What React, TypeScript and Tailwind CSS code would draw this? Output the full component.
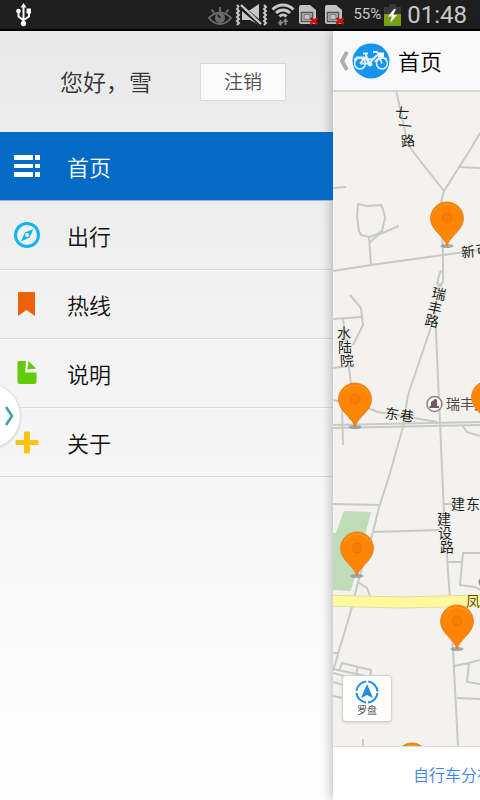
import type { ReactNode } from "react";

function UsbIcon() {
  return (
    <svg width="18" height="24" viewBox="0 0 18 24" fill="none" stroke="#fff" strokeWidth="2">
      <path d="M8.500 3v17M3.500 9v4.500l4.500 3.500M14 9v4.500l-4.500 3" />
      <path d="M8.500 0l3 4.500h-6z" fill="#fff" stroke="none" />
      <circle cx="3.500" cy="8" r="2.300" fill="#fff" stroke="none" />
      <path d="M11.500 5.500h4.500v5h-4.500z" fill="#fff" stroke="none" />
      <circle cx="8.500" cy="20.500" r="2.700" fill="#fff" stroke="none" />
    </svg>
  );
}

function EyeIcon() {
  return (
    <svg width="24" height="22" viewBox="0 0 24 22" fill="none" stroke="#6a6a6a">
      <path d="M1 14c6-7 16-7 22 0-6 8-16 8-22 0z" strokeWidth="2" />
      <circle cx="12" cy="14" r="5" fill="#6a6a6a" stroke="none" />
      <path d="M12.500 14l-2.500-3" stroke="#1e1e1e" strokeWidth="1.600" />
      <path d="M12 8V3M6 9L3.500 5.500M18 9l2.500-3.500" strokeWidth="2" />
    </svg>
  );
}

function VibrateIcon() {
  return (
    <svg width="33" height="22" viewBox="0 0 33 22" fill="none" stroke="#c8c8c8">
      <path d="M2 1l2 2-2 2 2 2-2 2 2 2-2 2 2 2-2 2 2 2-2 2M29 1l2 2-2 2 2 2-2 2 2 2-2 2 2 2-2 2 2 2-2 2" strokeWidth="2" />
      <path d="M7 6h8l9-6v21l-9-5H7z" fill="#c8c8c8" stroke="none" />
      <path d="M5 2l22 19" stroke="#1e1e1e" strokeWidth="5" />
      <path d="M6 1l20 19" strokeWidth="2.400" />
    </svg>
  );
}

function WifiIcon() {
  return (
    <svg width="24" height="23" viewBox="0 0 24 23" fill="none" stroke="#c8c8c8" strokeWidth="3">
      <path d="M1.500 6.500c6-6 15-6 21 0M5 10c4-4 10-4 14 0M8.500 13.500c2-2 5-2 7 0" />
      <path d="M9.500 17v4M14.500 22v-4" stroke="#858585" strokeWidth="2" />
      <path d="M6.500 19h6l-3 4zM11.500 19h6l-3-4z" fill="#858585" stroke="none" />
    </svg>
  );
}

function SimIcon() {
  return (
    <svg width="22" height="20" viewBox="0 0 22 20" fill="none">
      <path d="M1 2q0-2 2-2h9l6 5v12q0 2-2 2H3q-2 0-2-2z" fill="#c2c2c2" />
      <rect x="3.500" y="7.500" width="11" height="9" stroke="#555" strokeWidth="1.500" />
      <rect x="6" y="9.500" width="6" height="5" stroke="#777" />
      <path d="M12.500 13l7 6M19.500 13l-7 6" stroke="#d00d0d" strokeWidth="2.400" />
    </svg>
  );
}

function BatteryIcon() {
  return (
    <svg width="17" height="22" viewBox="0 0 17 22">
      <path d="M5 0h7v3h5v19H0V3h5z" fill="#383838" />
      <path d="M0 10h17v12H0z" fill="#77a315" />
      <path d="M10 5L4 12.500h4l-2 6.500L13 11H9l3-6z" fill="#fff" />
    </svg>
  );
}

const menu: { label: string; active?: boolean; icon: ReactNode }[] = [
  {
    label: "首页",
    active: true,
    icon: <path d="M1 3h19v5H1zM22 3h5v5h-5zM1 12h19v4H1zM22 12h5v4h-5zM1 20h19v5H1zM22 20h5v5h-5z" fill="#fff" />,
  },
  {
    label: "出行",
    icon: (
      <g>
        <circle cx="14" cy="14" r="11.500" fill="none" stroke="#0cb6f5" strokeWidth="3" />
        <path d="M20.500 8l-4 8.500L8 20.500l4-9z" fill="#0cb6f5" />
        <circle cx="14" cy="14" r="2" fill="#efefef" />
      </g>
    ),
  },
  { label: "热线", icon: <path d="M5 3q0-1 1-1h15q1 0 1 1v23l-8.500-6L5 26z" fill="#ee6203" /> },
  {
    label: "说明",
    icon: (
      <g fill="#63ca08">
        <path d="M6 2h7l-1 11.500h11.500V23q0 2-2 2h-15q-2 0-2-2V4q0-2 1.500-2z" />
        <path d="M15.500 2l7.500 7.500-8.500 1z" />
      </g>
    ),
  },
  { label: "关于", icon: <path d="M11.500 4h5v8.500H25v4h-8.500V25h-5v-8.500H3v-4h8.500z" fill="#ffc411" stroke="#ffc411" strokeLinejoin="round" /> },
];

function Pin({ x, y }: { x: number; y: number }) {
  return (
    <g transform={`translate(${x} ${y})`}>
      <ellipse cx="0" cy="0" rx="6.500" ry="2" fill="#8a8a88" opacity="0.700" />
      <path d="M0 0C-2-9-16.500-16-16.500-27.500a16.500 16.500 0 0 1 33 0C16.500-16 2-9 0 0z" fill="#ff8604" stroke="#e5780f" strokeWidth="0.800" />
      <path d="M-13-34a15 15 0 0 1 26 0" fill="none" stroke="#ff9a30" />
      <circle cx="0" cy="-28" r="5" fill="#f67d05" stroke="#e87406" strokeWidth="0.800" />
    </g>
  );
}

const roads = [
  "M396 90L408 145L418 158L444 191",
  "M480 133L470 150L444 191L441 203L443 255V282L436 290",
  "M458 167L480 168",
  "M333 188L346 187",
  "M333 271L371 265L443 255L480 250",
  "M358 204L367 206L381 205L383 209L385 218L382 231L375 235L369 237L361 235L359 231L357 216Z",
  "M399 226L380 234L373 239L370 243M369 237L371 265",
  "M350 295L361 308L363 325L353 345",
  "M333 319L362 317M343 318L344 327L351 384",
  "M333 368L348 366M333 400L341 402M342 406L343 445",
  "M443 271L440 272L437 284L442 286",
  "M440 285L431 327L408 395L403 427L388 480L379 507L373 532L358 582L352 607L333 671",
  "M435 310L440 423L443 490L444 513L450 600L453 650L458 746",
  "M368 408L378 412L403 416L437 422",
  "M333 425L480 422M333 428L480 425",
  "M462 425L467 432L480 436",
  "M333 504L379 505M373 532L440 530M443 504H453",
  "M448 562H461M480 553L463 553L460 585L475 587L480 590",
  "M358 582L367 588L370 596M333 653H338",
  "M339 671L342 663L371 670L370 677L333 669M358 666L356 675M333 673L344 676",
  "M333 682L343 685M333 696L343 698M363 739V746",
  "M454 666L469 663L480 660M469 663L467 682L480 684M457 698L480 699",
];

/* [character, x, baseline y, rotation] */
const labels: [string, number, number, number][] = [
  ["七", 395, 118, 10],
  ["一", 398, 131, 6],
  ["路", 401, 146, -6],
  ["瑞", 432, 299, 12],
  ["丰", 428, 313, 12],
  ["路", 425, 326, 12],
  ["水", 337, 338, 0],
  ["陆", 338, 352, 0],
  ["院", 340, 366, -4],
  ["东", 385, 419, 8],
  ["巷", 400, 421, 8],
  ["新", 461, 257, -6],
  ["可", 476, 255, -6],
  ["建", 451, 509, 0],
  ["东", 466, 509, 0],
  ["建", 437, 524, 0],
  ["设", 438, 538, 0],
  ["路", 440, 552, 0],
];

function MapCanvas() {
  return (
    <svg className="block h-full w-full font-normal" role="img" aria-label="地图">
      <g transform="translate(-333 -92)">
        <path d="M345 511L371 512L351 591L333 590V533H336L343 513Z" fill="#bfdcb9" />
        <g fill="none" stroke="#c9c9c9" strokeWidth="2" strokeLinejoin="round">
          {roads.map((d) => (
            <path key={d} d={d} />
          ))}
        </g>
        <path d="M320 595L402 597L480 595L900 590V600L480 606L402 608L320 606Z" fill="#fffa9f" stroke="#e3dc9c" />
        <g fontSize="14" fill="#1c1c1c" stroke="#f3f2ee" strokeWidth="1" style={{ paintOrder: "stroke" }}>
          {labels.map(([ch, x, y, r], i) => (
            <text key={i} x={x} y={y} transform={`rotate(${r} ${x + 7} ${y - 5})`}>
              {ch}
            </text>
          ))}
          <text x="466" y="606" fill="#6b4310" stroke="#fffa9f">凤</text>
          <text x="446" y="409" fill="#554647">瑞丰大</text>
        </g>
        <circle cx="434.500" cy="404" r="7.500" fill="#fff" stroke="#8e8080" strokeWidth="1.500" />
        <path d="M429.500 408v-2h1.500v-4l3-2 1-1.500 2 1.500v6h2v2z" fill="#705d5e" />
        <circle cx="484" cy="582" r="5" fill="#e02020" stroke="#999" />
        <Pin x={447} y={246} />
        <Pin x={355} y={427} />
        <Pin x={488} y={425} />
        <Pin x={357} y={576} />
        <Pin x={457} y={649} />
        <Pin x={412} y={787} />
      </g>
    </svg>
  );
}

function BikeLogo() {
  return (
    <svg width="38" height="36" viewBox="0 0 38 36" fill="none" stroke="#e4f3ff">
      <ellipse cx="19" cy="18" rx="18.500" ry="17.500" fill="#1595f0" stroke="none" />
      <circle cx="8" cy="20.500" r="5.500" strokeWidth="1.500" />
      <circle cx="30" cy="20.500" r="5.500" strokeWidth="1.500" />
      <path d="M2 17q6-4 11 1l-1-4H4z" fill="#e4f3ff" fillOpacity="0.600" strokeWidth="1" />
      <path d="M8 20.500h9l8-8M8 20.500l5-6 4.500 6-4-9.500M15 15c3 3 7 1 10-3M30 20.500L25 9h-4M11 10.500h5" strokeWidth="1.800" />
      <path d="M23 19q4-7 12-3" strokeWidth="1.600" />
      <circle cx="18" cy="21" r="2" fill="#e4f3ff" />
      <path d="M26 9.500h6v4.500h-5z" fill="#fff" stroke="none" />
    </svg>
  );
}

export default function App() {
  return (
    <div className="flex h-screen flex-col overflow-hidden bg-white font-['Noto_Sans_CJK_SC',sans-serif] font-[350]">
      <header className="flex h-[31px] shrink-0 items-center border-b-2 border-black bg-[#1e1e1e] pr-[13px] pl-[15px] font-[Roboto,sans-serif] font-normal text-[#c8c8c8]">
        <UsbIcon />
        <div className="ml-auto flex items-center gap-[3px]">
          <EyeIcon />
          <VibrateIcon />
          <WifiIcon />
          <div className="flex gap-1">
            <SimIcon />
            <SimIcon />
          </div>
          <span className="pl-1 text-[15px]">55%</span>
          <BatteryIcon />
          <span className="pl-[3px] text-2xl">01:48</span>
        </div>
      </header>

      <div className="relative flex min-h-0 flex-1">
        <aside className="w-[333px] shrink-0 bg-linear-to-b from-[#e9e9e9] via-[#f5f5f5] to-[#fefefe]">
          <div className="flex h-[101px] items-center justify-between pr-[47px] pl-[60px]">
            <p className="text-[23px] text-[#333]">您好，雪</p>
            <button className="h-[38px] w-[86px] border border-[#dadada] bg-[#fbfbfb] text-[19px] text-[#505050]">注销</button>
          </div>
          <nav>
            {menu.map((item) => (
              <a
                key={item.label}
                href="#"
                className={
                  item.active
                    ? "relative z-20 flex h-[69px] items-center border-b border-[#9db3cf] bg-[#036bc6] pl-[13px] text-[22px] text-white"
                    : "flex h-[69px] items-center border-b border-[#d9d9d9] pl-[13px] text-[22px] text-[#111] shadow-[0_1px_0_#fafafa]"
                }
              >
                <svg width="28" height="28" viewBox="0 0 28 28" aria-hidden="true">
                  {item.icon}
                </svg>
                <span className="ml-[26px]">{item.label}</span>
              </a>
            ))}
          </nav>
        </aside>

        <main className="relative z-10 flex min-w-0 flex-1 flex-col shadow-[-2px_0_10px_rgba(0,0,0,0.25)]">
          <div className="flex h-[61px] shrink-0 items-center border-b-2 border-[#d5d5d5] bg-[#f9f9f9] pl-[5px]">
            <button aria-label="返回" className="flex items-center">
              <svg width="14" height="20" viewBox="0 0 14 20" fill="none">
                <path d="M9 1L4 10l5 9" stroke="#adadad" strokeWidth="4" />
              </svg>
              <BikeLogo />
            </button>
            <h1 className="ml-2 text-[22px] whitespace-nowrap text-black">首页</h1>
          </div>
          <div className="relative min-h-0 flex-1 overflow-hidden bg-[#f3f2ee]">
            <MapCanvas />
            <button className="absolute bottom-6 left-[9px] flex h-[47px] w-[50px] flex-col items-center rounded border border-[#d2d2d2] bg-white pt-1 text-[10px] leading-3 text-[#333] shadow-sm">
              <svg width="26" height="24" viewBox="0 0 26 24" fill="none">
                <circle cx="13" cy="12" r="10.500" stroke="#1f8de6" strokeWidth="2" strokeDasharray="14.490 2" strokeDashoffset="-1" />
                <path d="M13 4l6 14-6-3-6 3z" fill="#1f8de6" />
              </svg>
              罗盘
            </button>
          </div>
          <div className="flex h-[54px] shrink-0 items-center overflow-hidden border-t border-[#dcdcdc] bg-white pl-20">
            <a href="#" className="text-base whitespace-nowrap text-[#3b82f6]">自行车分布</a>
          </div>
        </main>

        <button
          aria-label="展开"
          className="absolute top-[352px] left-[-45px] z-20 flex size-[66px] items-center justify-end rounded-full border border-[#dedede] bg-white pr-1.5 shadow-sm"
        >
          <svg width="9" height="20" viewBox="0 0 9 20" fill="none">
            <path d="M1 1l6 9-6 9" stroke="#4398b8" strokeWidth="2.500" />
          </svg>
        </button>
      </div>
    </div>
  );
}
